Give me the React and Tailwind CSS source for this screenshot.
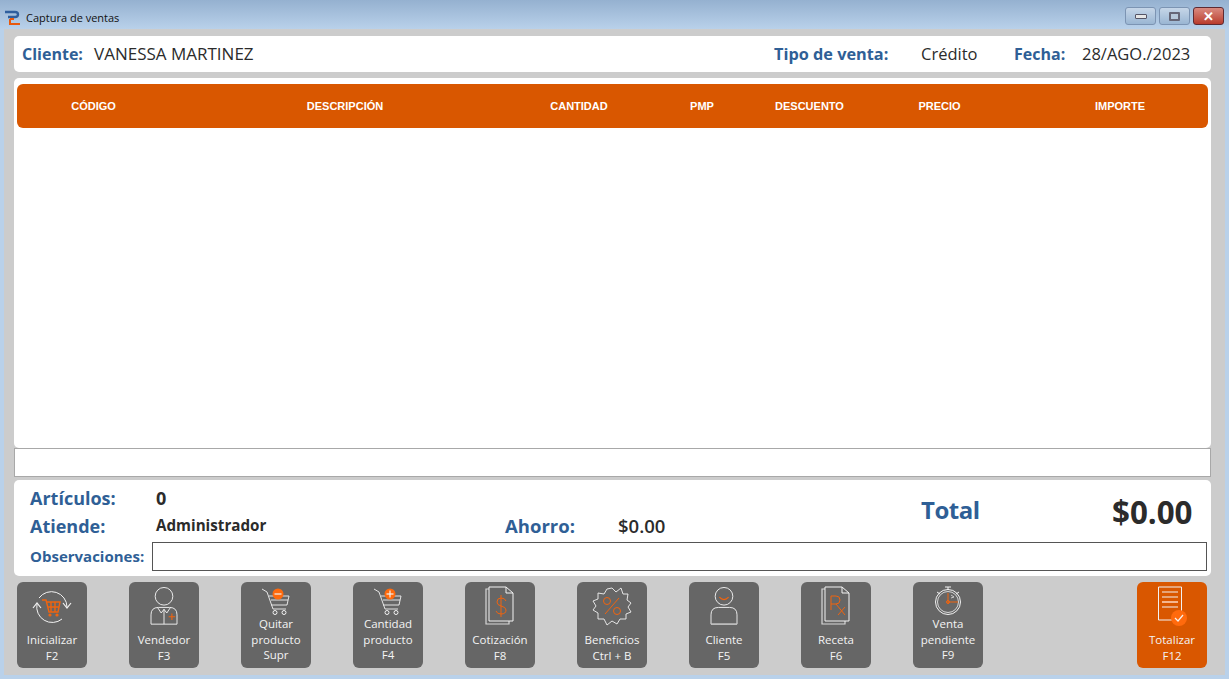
import React from 'react';

const FONT = "font-['Open_Sans','Noto_Sans',sans-serif]";

const columns = [
  { label: 'CÓDIGO', width: 'w-[153px]' },
  { label: 'DESCRIPCIÓN', width: 'w-[350px]' },
  { label: 'CANTIDAD', width: 'w-[118px]' },
  { label: 'PMP', width: 'w-[128px]' },
  { label: 'DESCUENTO', width: 'w-[87px]' },
  { label: 'PRECIO', width: 'w-[173px]' },
  { label: 'IMPORTE', width: 'w-[188px]' },
];

const WHITE = '#f2f2f2';
const ORANGE = '#f0640f';

const RefreshCart = () => (
  <svg width="42" height="36" viewBox="0 0 42 36" fill="none">
    <path d="M8 10 A15.5 15.5 0 0 1 36 19" stroke={WHITE} strokeWidth="1" />
    <path d="M6 16 A15.5 15.5 0 0 0 31 31" stroke={WHITE} strokeWidth="1" />
    <path d="M32 15 L36 20 L40 15" stroke={WHITE} strokeWidth="1.2" />
    <path d="M2 20 L6 15 L10 20" stroke={WHITE} strokeWidth="1.2" />
    <path d="M11 12 H15 L18 24 H27 L29 14 H16 M17 19 H28 M20 14 V24 M24 14 V24" stroke={ORANGE} strokeWidth="1.4" />
    <circle cx="19" cy="27" r="1.6" fill={ORANGE} />
    <circle cx="26" cy="27" r="1.6" fill={ORANGE} />
  </svg>
);

const Seller = () => (
  <svg width="28" height="39" viewBox="0 0 30 42" fill="none">
    <circle cx="15" cy="10" r="9.5" stroke={WHITE} />
    <path d="M1 40 V30 Q1 22 9 22 H21 Q29 22 29 30 V40 Z" stroke={WHITE} />
    <path d="M8 22 L12 28 L15 24 L18 28 L22 22 M15 24 V40" stroke={WHITE} />
    <path d="M20 32 H27 M23.5 28.5 V35.5" stroke={ORANGE} strokeWidth="1.2" />
  </svg>
);

const CartBadge = ({ plus }) => (
  <svg width="30" height="30" viewBox="0 0 30 30" fill="none">
    <path d="M1 3 L6 6 L12 23 H25 M8 10 H28 L26 19 H10 M10 14 H27" stroke={WHITE} strokeWidth="0.9" />
    <circle cx="14" cy="26.5" r="2" stroke={WHITE} />
    <circle cx="23" cy="26.5" r="2" stroke={WHITE} />
    <circle cx="17" cy="8" r="5.5" fill="#ff6a0d" />
    <path d="M13.5 8 H20.5" stroke={WHITE} strokeWidth="1.2" />
    {plus && <path d="M17 4.5 V11.5" stroke={WHITE} strokeWidth="1.2" />}
  </svg>
);

const Sheets = ({ children }) => (
  <svg width="30" height="40" viewBox="0 0 30 40" fill="none">
    <path d="M4 3 H1 V38 H24 V35" stroke="#d8d8d8" strokeWidth="1.2" />
    <path d="M4 1 H21 L28 7 V35 H4 Z M21 1 V7 H28" stroke={WHITE} strokeWidth="1" />
    {children}
  </svg>
);

const Badge = () => (
  <svg width="40" height="40" viewBox="0 0 40 40" fill="none">
    <path
      d="M20 2 L24 6 L29 2 L31 8 L36 8 L35 14 L39 17 L36 21 L39 26 L34 28 L34 33 L28 33 L25 38 L20 35 L15 39 L12 33 L6 33 L6 27 L1 24 L4 20 L1 15 L6 13 L6 7 L12 8 L15 3 Z"
      stroke={WHITE}
      strokeWidth="0.9"
    />
    <circle cx="15" cy="15" r="3.5" stroke={ORANGE} />
    <circle cx="25" cy="25" r="3.5" stroke={ORANGE} />
    <path d="M27 12 L13 28" stroke={ORANGE} />
  </svg>
);

const Client = () => (
  <svg width="28" height="39" viewBox="0 0 30 42" fill="none">
    <circle cx="15" cy="10" r="9.5" stroke={WHITE} />
    <path d="M10 11 Q15 16 20 11" stroke={ORANGE} strokeWidth="1.2" />
    <path d="M1 40 V30 Q1 22 9 22 H21 Q29 22 29 30 V40 Z" stroke={WHITE} />
    <path d="M1 40 H29" stroke="#bbbbbb" strokeWidth="1.5" />
  </svg>
);

const Stopwatch = () => (
  <svg width="28" height="30" viewBox="0 0 28 30" fill="none">
    <circle cx="14" cy="16" r="12.5" stroke={WHITE} />
    <circle cx="14" cy="16" r="10.5" stroke={WHITE} strokeWidth="0.8" />
    <path d="M11 1 H17 M14 1 V4 M3 6 L6 8 M25 6 L22 8" stroke={WHITE} />
    <path d="M14 7 V16 H24 M14 16 V18" stroke={ORANGE} />
    <circle cx="14" cy="16" r="1.5" stroke={ORANGE} />
    <path d="M17 9 L20 11 L17 12" stroke={WHITE} strokeWidth="0.7" />
  </svg>
);

const Ticket = () => (
  <svg width="31" height="41" viewBox="0 0 31 41" fill="none">
    <path d="M1.5 1 H24.5 V34 H1.5 Z" fill="#d95700" stroke={WHITE} />
    <path d="M5 6 H21 M5 11 H21 M5 21 H21" stroke={WHITE} />
    <path d="M5 16 H21" stroke="#f5b78f" strokeWidth="2" />
    <circle cx="22" cy="32" r="8" fill="#ff6a0d" />
    <path d="M18 32 L21 35 L26 29" stroke={WHITE} strokeWidth="1.2" />
  </svg>
);

const actions = [
  { lines: ['Inicializar', 'F2'], icon: <RefreshCart /> },
  { lines: ['Vendedor', 'F3'], icon: <Seller /> },
  { lines: ['Quitar', 'producto', 'Supr'], icon: <CartBadge /> },
  { lines: ['Cantidad', 'producto', 'F4'], icon: <CartBadge plus /> },
  {
    lines: ['Cotización', 'F8'],
    icon: (
      <Sheets>
        <path d="M21 15 Q20 12 16 12 Q12 12 12 16 Q12 19 16 20 Q21 21 21 24 Q21 28 16 28 Q12 28 11 25 M16 9 V31" stroke={ORANGE} />
      </Sheets>
    ),
  },
  { lines: ['Beneficios', 'Ctrl + B'], icon: <Badge /> },
  { lines: ['Cliente', 'F5'], icon: <Client /> },
  {
    lines: ['Receta', 'F6'],
    icon: (
      <Sheets>
        <path d="M10 24 V10 H15 Q19 10 19 14 Q19 18 15 18 H10 M15 18 L24 29 M24 21 L17 29" stroke={ORANGE} />
      </Sheets>
    ),
  },
  { lines: ['Venta', 'pendiente', 'F9'], icon: <Stopwatch /> },
];

const ActionButton = ({ lines, icon, primary }) => (
  <button
    className={`w-[70px] h-[86px] shrink-0 rounded-[6px] flex flex-col items-center pt-[3px] text-[11.5px] leading-[15.5px] text-[#f4f4f4] ${
      primary ? 'bg-[#d95700]' : 'bg-[#666666]'
    }`}
  >
    <div className={`flex items-center justify-center ${lines.length === 3 ? 'h-[31px]' : 'h-[42px]'}`}>{icon}</div>
    <div className={lines.length === 3 ? 'mt-[0px]' : 'mt-[5px]'}>
      {lines.map((line) => (
        <div key={line}>{line}</div>
      ))}
    </div>
  </button>
);

const WindowButton = ({ children, close }) => (
  <div
    className={`w-[31px] h-[18px] rounded-[3px] border flex items-center justify-center ${
      close
        ? 'border-[#5e2a32] bg-gradient-to-b from-[#d98a80] to-[#b83a2c]'
        : 'border-[#7c94b3] bg-gradient-to-b from-[#c6d6e8] to-[#9ab6d3]'
    }`}
  >
    {children}
  </div>
);

export default function App() {
  return (
    <div className={`w-[1229px] h-[679px] overflow-hidden flex flex-col bg-[#b9d1ea] ${FONT}`}>
      {/* Title bar */}
      <div className="h-[29px] shrink-0 flex items-center pt-[7px] pl-[5px] pr-[5px] bg-gradient-to-b from-[#95b1d0] to-[#b9d1ea]">
        <svg width="16" height="16" viewBox="0 0 16 16" fill="none">
          <path d="M0 2 H10 Q13 2 13 4.5 Q13 7 10 7 H3" stroke="#2f5f9e" strokeWidth="2.4" />
          <path d="M5 9 V14 H15 M5 9 H9" stroke="#e8590c" strokeWidth="2" />
        </svg>
        <span className="ml-[5px] text-[11px] text-[#111111]">Captura de ventas</span>
        <div className="ml-auto flex gap-[3px] mb-[4px]">
          <WindowButton>
            <div className="w-[12px] h-[5px] bg-[#e6e6e6] border border-[#555566] rounded-[1px]" />
          </WindowButton>
          <WindowButton>
            <div className="w-[11px] h-[9px] border-2 border-[#666677] bg-[#b7c8da] rounded-[1px]" />
          </WindowButton>
          <WindowButton close>
            <span className="text-white text-[13px] leading-none font-bold">✕</span>
          </WindowButton>
        </div>
      </div>

      {/* Body */}
      <div className="ml-[4px] mr-[4px] h-[646px] bg-[#cccccc] flex flex-col pl-[10px] pr-[14px] pt-[7px]">
        {/* Header panel */}
        <div className="h-[36px] shrink-0 bg-white rounded-[5px] flex items-center pl-[8px] text-[16.5px] text-[#2b2b2b]">
          <span className="w-[72px] text-[16px] font-bold text-[#2f5f96]">Cliente:</span>
          <span className="w-[680px] text-[17px]">VANESSA MARTINEZ</span>
          <span className="w-[147px] text-[16.3px] font-bold text-[#2f5f96]">Tipo de venta:</span>
          <span className="w-[93px]">Crédito</span>
          <span className="w-[68px] text-[16px] font-bold text-[#2f5f96]">Fecha:</span>
          <span>28/AGO./2023</span>
        </div>

        {/* Sale lines */}
        <div className="mt-[6px] h-[370px] shrink-0 bg-white rounded-[5px] px-[3px] pt-[6px]">
          <div className="h-[44px] bg-[#d95700] rounded-[6px] flex items-center font-['Liberation_Sans',sans-serif] text-[11px] font-bold text-white">
            {columns.map((col) => (
              <div key={col.label} className={`${col.width} shrink-0 text-center`}>
                {col.label}
              </div>
            ))}
          </div>
        </div>

        {/* Empty strip under the grid */}
        <div className="h-[29px] shrink-0 bg-white border border-[#a8a8a8]" />

        {/* Totals */}
        <div className="mt-[3px] h-[96px] shrink-0 bg-white rounded-[5px] pl-[16px] pr-[4px] pt-[6px] flex flex-col text-[#2b2b2b]">
          <div className="h-[26px] flex items-center">
            <span className="w-[126px] text-[18px] font-bold text-[#2f5f96] -mt-[2px]">Artículos:</span>
            <span className="text-[18px] font-bold -mt-[2px]">0</span>
          </div>
          <div className="h-[27px] flex items-center">
            <span className="w-[126px] text-[18px] font-bold text-[#2f5f96] mt-[2px]">Atiende:</span>
            <span className="w-[349px] text-[15.2px] font-bold -mt-[1px]">Administrador</span>
            <span className="w-[113px] text-[18.5px] font-bold text-[#2f5f96]">Ahorro:</span>
            <span className="w-[303px] text-[18.5px] font-semibold">$0.00</span>
            <span className="w-[191px] text-[24px] font-bold text-[#2f5f96] -mt-[32px] tracking-[-0.5px]">Total</span>
            <span className="text-[31.3px] font-bold -mt-[27px]">$0.00</span>
          </div>
          <div className="h-[29px] mt-[3px] flex items-center">
            <span className="w-[122px] text-[15px] font-bold text-[#2f5f96] whitespace-nowrap">Observaciones:</span>
            <div className="w-[1055px] h-[29px] border border-[#555555] bg-white" />
          </div>
        </div>

        {/* Actions */}
        <div className="mt-[6px] pl-[3px] flex">
          <div className="flex gap-[42px]">
            {actions.map((action) => (
              <ActionButton key={action.lines[0]} {...action} />
            ))}
          </div>
          <div className="ml-[154px]">
            <ActionButton lines={['Totalizar', 'F12']} icon={<Ticket />} primary />
          </div>
        </div>
      </div>
    </div>
  );
}
